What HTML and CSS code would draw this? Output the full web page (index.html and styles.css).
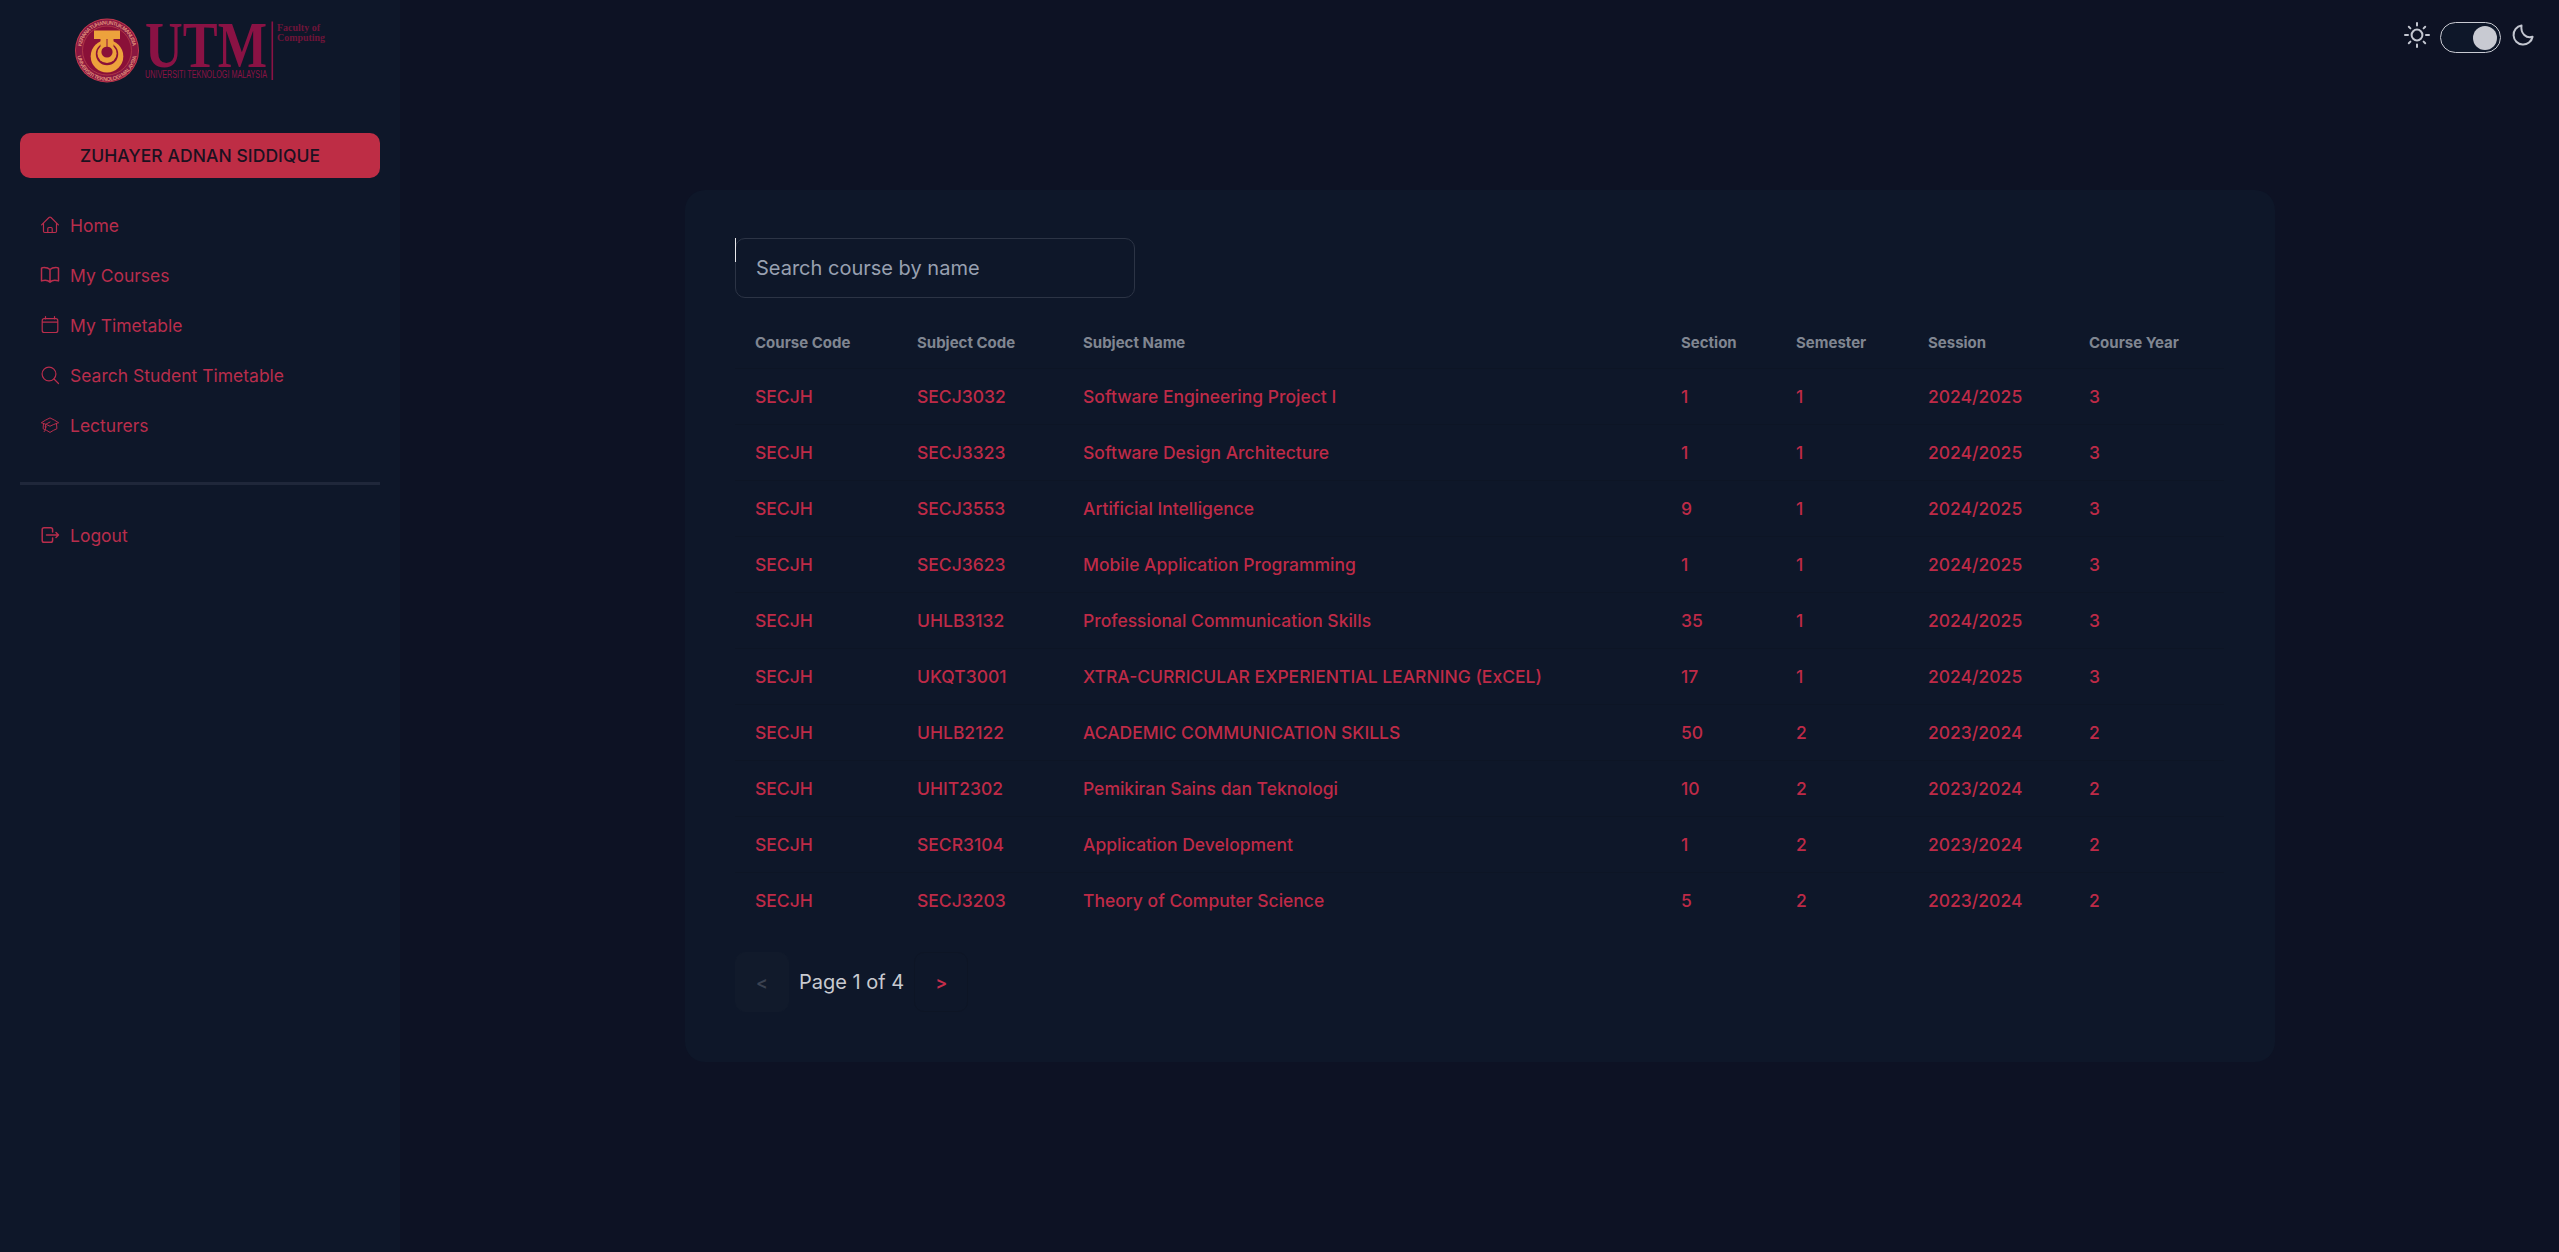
FILE: index.html
```html
<!DOCTYPE html>
<html lang="en">
<head>
<meta charset="utf-8">
<title>My Courses</title>
<link rel="stylesheet" href="styles.css">
</head>
<body>
<div class="app">
  <aside class="sidebar">
    <svg class="logo" viewBox="0 0 280 100" width="280" height="100">
      <defs>
        <path id="ring-top" d="M21 50.500A26 26 0 0 1 73 50.500"/>
        <path id="ring-bottom" d="M17 51A30 30 0 0 0 77 51"/>
      </defs>
      <circle cx="47" cy="50.500" r="32" fill="#c23a4e"/>
      <circle cx="47" cy="50.500" r="31" fill="#8a1740"/>
      <circle cx="47" cy="50.500" r="24.500" fill="#8a1038" stroke="#b8404a" stroke-width="0.800"/>
      <text class="seal-text"><textPath href="#ring-top" textLength="73" startOffset="4">KERANA TUHAN UNTUK MANUSIA</textPath></text>
      <text class="seal-text"><textPath href="#ring-bottom" textLength="84" startOffset="5">UNIVERSITI TEKNOLOGI MALAYSIA</textPath></text>
      <circle cx="47" cy="56.200" r="16.300" fill="#eda23c"/>
      <circle cx="47" cy="54" r="11.200" fill="#8a1038"/>
      <circle cx="47" cy="53.500" r="9.600" fill="#eda23c"/>
      <circle cx="47" cy="52" r="5.600" fill="#8a1038"/>
      <path d="M34 30.500h26v8.500H34zM40.500 39h13v7.500h-13z" fill="#eda23c"/>
      <path d="M47 39v12" stroke="#8a1038" stroke-width="1"/>
      <text class="utm" x="85" y="66.500" textLength="122" lengthAdjust="spacingAndGlyphs">UTM</text>
      <text class="utm-sub" x="85" y="78" textLength="122" lengthAdjust="spacingAndGlyphs">UNIVERSITI TEKNOLOGI MALAYSIA</text>
      <path d="M212.300 21.500v58.500" stroke="#8a1244" stroke-width="1.600"/>
      <text class="faculty" x="217" y="31" textLength="43" lengthAdjust="spacingAndGlyphs">Faculty of</text>
      <text class="faculty" x="217" y="40.500" textLength="48" lengthAdjust="spacingAndGlyphs">Computing</text>
    </svg>
    <button class="user">ZUHAYER ADNAN SIDDIQUE</button>
    <nav class="menu">
      <a class="item"><svg class="icon" viewBox="0 0 20 20"><path d="M1.600 9.900L9 2.500a1.400 1.400 0 0 1 2 0l7.400 7.400M3.500 8v8.300c0 .7.500 1.200 1.200 1.200h10.600c.7 0 1.200-.5 1.200-1.200V8M7.800 17.500v-4c0-.6.400-1 1-1h2.400c.6 0 1 .4 1 1v4"/></svg>Home</a>
      <a class="item"><svg class="icon bold" viewBox="0 0 20 20"><path d="M10 4.500C8.500 3 6 2.400 3.500 2.500c-.8 0-1.500.4-2 .7v12.700C4.500 15 8 15.200 10 17.100c2-1.900 5.500-2.100 8.500-1.200V3.200c-.5-.3-1.200-.7-2-.7C14 2.400 11.500 3 10 4.500zv12.800"/></svg>My Courses</a>
      <a class="item"><svg class="icon" viewBox="0 0 20 20"><path d="M5.500 1.500V4M14.500 1.500V4M4.200 3.700h11.600c1.200 0 2 .8 2 2v9.800c0 1.200-.8 2-2 2H4.200c-1.200 0-2-.8-2-2V5.700c0-1.200.8-2 2-2zM2.200 7.200h15.600"/></svg>My Timetable</a>
      <a class="item"><svg class="icon" viewBox="0 0 20 20"><circle cx="9" cy="9" r="6.900"/><path d="M14 14l4.500 4.500"/></svg>Search Student Timetable</a>
      <a class="item"><svg class="icon" viewBox="0 0 24 24"><path d="M4.260 10.147a60.438 60.438 0 0 0-.491 6.347A48.620 48.620 0 0 1 12 20.904a48.620 48.620 0 0 1 8.232-4.410 60.460 60.460 0 0 0-.491-6.347m-15.482 0a50.636 50.636 0 0 0-2.658-.813A59.906 59.906 0 0 1 12 3.493a59.903 59.903 0 0 1 10.399 5.840c-.896.248-1.783.520-2.658.814m-15.482 0A50.717 50.717 0 0 1 12 13.489a50.702 50.702 0 0 1 7.740-3.342M6.750 15a.75.75 0 1 0 0-1.500.75.75 0 0 0 0 1.500Zm0 0v-3.675A55.378 55.378 0 0 1 12 8.443m-7.007 11.550A5.981 5.981 0 0 0 6.750 15.750v-1.500"/></svg>Lecturers</a>
    </nav>
    <hr class="rule">
    <nav class="menu">
      <a class="item"><svg class="icon bold" viewBox="0 0 20 20"><path d="M12.600 7V4.500c0-1-.8-1.800-1.800-1.800H4c-1 0-1.800.8-1.800 1.800v11c0 1 .8 1.800 1.800 1.800h6.800c1 0 1.800-.8 1.800-1.800V13M6.500 10h12M16 7.500l2.500 2.500-2.500 2.500"/></svg>Logout</a>
    </nav>
  </aside>
  <main class="main">
    <div class="theme">
      <svg class="theme-icon" viewBox="0 0 26 26"><circle cx="13" cy="13" r="5.400"/><path d="M13 1v2.500M13 22.500V25M1 13h3M22 13H25M4.800 4.800l1.600 1.600M19.600 19.600l1.600 1.600M4.800 21.200l1.600-1.600M19.600 6.400l1.600-1.600"/></svg>
      <span class="switch"><span class="knob"></span></span>
      <svg class="theme-icon" viewBox="0 0 26 26"><path d="M11.500 3.500A9.600 9.600 0 1 0 22.600 14.800C16.500 17 10.300 11.500 11.500 3.500z"/></svg>
    </div>
    <section class="card">
      <div class="search"><input class="field" type="text" placeholder="Search course by name"><span class="caret"></span></div>
      <table class="courses">
        <colgroup><col class="c1"><col class="c2"><col class="c3"><col class="c4"><col class="c5"><col class="c6"><col class="c7"></colgroup>
        <thead><tr><th>Course Code</th><th>Subject Code</th><th>Subject Name</th><th>Section</th><th>Semester</th><th>Session</th><th>Course Year</th></tr></thead>
        <tbody>
          <tr><td>SECJH</td><td>SECJ3032</td><td>Software Engineering Project I</td><td>1</td><td>1</td><td>2024/2025</td><td>3</td></tr>
          <tr><td>SECJH</td><td>SECJ3323</td><td>Software Design Architecture</td><td>1</td><td>1</td><td>2024/2025</td><td>3</td></tr>
          <tr><td>SECJH</td><td>SECJ3553</td><td>Artificial Intelligence</td><td>9</td><td>1</td><td>2024/2025</td><td>3</td></tr>
          <tr><td>SECJH</td><td>SECJ3623</td><td>Mobile Application Programming</td><td>1</td><td>1</td><td>2024/2025</td><td>3</td></tr>
          <tr><td>SECJH</td><td>UHLB3132</td><td>Professional Communication Skills</td><td>35</td><td>1</td><td>2024/2025</td><td>3</td></tr>
          <tr><td>SECJH</td><td>UKQT3001</td><td>XTRA-CURRICULAR EXPERIENTIAL LEARNING (ExCEL)</td><td>17</td><td>1</td><td>2024/2025</td><td>3</td></tr>
          <tr><td>SECJH</td><td>UHLB2122</td><td>ACADEMIC COMMUNICATION SKILLS</td><td>50</td><td>2</td><td>2023/2024</td><td>2</td></tr>
          <tr><td>SECJH</td><td>UHIT2302</td><td>Pemikiran Sains dan Teknologi</td><td>10</td><td>2</td><td>2023/2024</td><td>2</td></tr>
          <tr><td>SECJH</td><td>SECR3104</td><td>Application Development</td><td>1</td><td>2</td><td>2023/2024</td><td>2</td></tr>
          <tr><td>SECJH</td><td>SECJ3203</td><td>Theory of Computer Science</td><td>5</td><td>2</td><td>2023/2024</td><td>2</td></tr>
        </tbody>
      </table>
      <div class="pager">
        <button class="page-btn off">&lt;</button>
        <span>Page 1 of 4</span>
        <button class="page-btn">&gt;</button>
      </div>
    </section>
  </main>
</div>
</body>
</html>
```

FILE: styles.css
```css
* { box-sizing: border-box; }
body {
  margin: 0;
  background: #0d1224;
  color: #c8cad0;
  font-family: Inter, "Liberation Sans", sans-serif;
  font-size: 20px;
}
button, input { font: inherit; }
.app { display: flex; height: 1252px; }

.sidebar {
  width: 400px;
  flex: none;
  padding: 0 20px;
  background: #0e1729;
}
.logo { display: block; margin-left: 40px; }
.utm { font: bold 66px "Liberation Serif", serif; fill: #8a1244; }
.utm-sub { font: 10px "Liberation Sans", sans-serif; fill: #8a1244; }
.faculty { font: bold 10px "Liberation Serif", serif; fill: #6e1439; }
.seal-text { font: bold 5.500px "Liberation Sans", sans-serif; fill: #dd8a78; }
.user {
  display: block;
  width: 360px;
  height: 45px;
  margin: 33px 0 0;
  padding: 0;
  border: 0;
  border-radius: 10px;
  background: #be2d45;
  color: #1b1120;
  font-size: 17.500px;
  font-weight: 500;
  letter-spacing: 0.070px;
}
.menu { padding: 22px 20px 0; }
.item {
  display: flex;
  align-items: center;
  gap: 10px;
  height: 50px;
  color: #b82d4c;
  font-size: 17.500px;
  font-weight: 400;
}
.icon {
  width: 20px;
  height: 20px;
  fill: none;
  stroke: currentColor;
  stroke-width: 1.200;
  stroke-linecap: round;
  stroke-linejoin: round;
}
.icon.bold { stroke-width: 1.500; }
.rule {
  height: 3px;
  margin: 32px 0 3px;
  border: 0;
  background: #1f273a;
}

.main { flex: 1; display: flex; flex-direction: column; }
.theme {
  display: flex;
  justify-content: flex-end;
  height: 190px;
  padding: 22px 23px 0 0;
}
.theme-icon {
  width: 26px;
  height: 26px;
  fill: none;
  stroke: #c3c6d0;
  stroke-width: 2;
  stroke-linecap: round;
  stroke-linejoin: round;
}
.switch {
  display: flex;
  align-items: center;
  justify-content: flex-end;
  width: 61px;
  height: 31px;
  margin: 0 9px 0 10px;
  padding-right: 3px;
  border: 1px solid #c8cad2;
  border-radius: 16px;
  background: #0e1729;
}
.knob { width: 24px; height: 24px; border-radius: 50%; background: #c8cad2; }

.card {
  width: 1590px;
  height: 872px;
  margin-left: 285px;
  padding: 48px 50px;
  border-radius: 20px;
  background: #0e1729;
}
.search { position: relative; width: 400px; height: 60px; }
.field {
  width: 400px;
  height: 60px;
  padding: 0 20px;
  border: 1px solid #2c3445;
  border-radius: 10px;
  background: transparent;
  color: inherit;
}
.field::placeholder { color: #98a0b0; opacity: 1; }
.caret { position: absolute; left: 0; top: 0; width: 1px; height: 24px; background: #e8e8ea; }

.courses {
  width: 1489px;
  margin-top: 19px;
  table-layout: fixed;
  border-collapse: collapse;
  text-align: left;
}
.c1 { width: 162px; }
.c2 { width: 166px; }
.c3 { width: 598px; }
.c4 { width: 115px; }
.c5 { width: 132px; }
.c6 { width: 161px; }
.c7 { width: 155px; }
th, td { padding: 0 0 0 20px; border-bottom: 1px solid #0d1525; white-space: nowrap; }
th { height: 51px; color: #808691; font-size: 15px; font-weight: 700; }
td { height: 56px; color: #be2a47; font-size: 17.500px; font-weight: 500; }
tbody tr:last-child td { border-bottom: 0; }

.pager { display: flex; align-items: center; gap: 10px; margin-top: 24px; }
.page-btn {
  width: 54px;
  height: 60px;
  padding: 0;
  border: 1px solid #0d1525;
  border-radius: 10px;
  background: #0e1729;
  color: #c52d4b;
  font-size: 17.500px;
  font-weight: 600;
}
.page-btn.off { background: #111a2b; border-color: #111a2b; color: #3b4251; }
```
